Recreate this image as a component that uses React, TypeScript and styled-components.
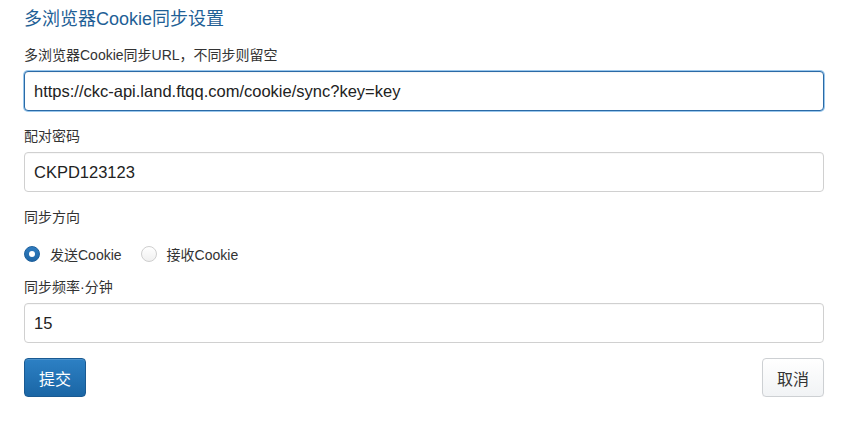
import React, { useState } from "react";
import styled, { createGlobalStyle } from "styled-components";

const Global = createGlobalStyle`
  html, body { margin: 0; padding: 0; background: #fff; }
  body {
    font-family: "Liberation Sans", Arial, "Noto Sans CJK SC", sans-serif;
    color: #333;
  }
  * { box-sizing: border-box; }
`;

const Page = styled.div`
  width: 800px;
  margin: 0 0 0 24px;
  padding-top: 7px;
`;

const Title = styled.h3`
  margin: 0 0 14px 0;
  font-size: 18px;
  line-height: 24px;
  font-weight: 400;
  color: #1f5f96;
`;

const Group = styled.div<{ $mb?: number }>`
  display: flex;
  flex-direction: column;
  margin-bottom: ${(p) => (p.$mb ?? 15)}px;
`;

const Label = styled.label<{ $mb?: number }>`
  font-size: 14px;
  line-height: 20px;
  color: #333;
  margin-bottom: ${(p) => (p.$mb ?? 6)}px;
`;

const Input = styled.input<{ $focus?: boolean }>`
  width: 100%;
  height: 40px;
  padding: 0 9px;
  font-family: "Liberation Sans", Arial, "Noto Sans CJK SC", sans-serif;
  font-size: 16.5px;
  color: #222;
  border: 1px solid ${(p) => (p.$focus ? "#2a6aa6" : "#d0d0d0")};
  border-radius: 4px;
  outline: none;
  background: #fff;
  box-shadow: ${(p) =>
    p.$focus ? "0 0 0 1px rgba(120, 180, 230, 0.75), inset 0 1px 1px rgba(0,0,0,0.04)" : "inset 0 1px 1px rgba(0,0,0,0.03)"};
`;

const RadioRow = styled.div`
  display: flex;
  align-items: center;
  height: 28px;
  margin: 13px 0 9px 0;
  gap: 19px;
`;

const RadioItem = styled.label`
  display: flex;
  align-items: center;
  gap: 10px;
  font-size: 14px;
  color: #333;
  cursor: pointer;
`;

const RadioDot = styled.span<{ $on?: boolean }>`
  width: 16px;
  height: 16px;
  border-radius: 50%;
  display: inline-flex;
  align-items: center;
  justify-content: center;
  background: ${(p) => (p.$on ? "linear-gradient(#2f7cc0, #1f66a6)" : "linear-gradient(#ffffff, #f0f0f0)")};
  border: 1px solid ${(p) => (p.$on ? "#1d5f9b" : "#cfcfcf")};
  &::after {
    content: "";
    width: 6px;
    height: 6px;
    border-radius: 50%;
    background: #fff;
    display: ${(p) => (p.$on ? "block" : "none")};
  }
`;

const Actions = styled.div`
  display: flex;
  justify-content: space-between;
  align-items: center;
`;

const Button = styled.button<{ $primary?: boolean }>`
  height: 39px;
  padding: 0 14px;
  font-family: "Liberation Sans", Arial, "Noto Sans CJK SC", sans-serif;
  font-size: 16px;
  border-radius: 4px;
  cursor: pointer;
  color: ${(p) => (p.$primary ? "#fff" : "#333")};
  background: ${(p) =>
    p.$primary ? "linear-gradient(#2d80c4, #1a66a5)" : "linear-gradient(#ffffff, #f1f3f5)"};
  border: 1px solid ${(p) => (p.$primary ? "#1a5a92" : "#cdd0d3")};
  box-shadow: ${(p) => (p.$primary ? "inset 0 1px 0 rgba(255,255,255,0.15)" : "0 1px 1px rgba(0,0,0,0.04)")};
`;

export default function App() {
  const [dir, setDir] = useState<"send" | "recv">("send");
  return (
    <>
      <Global />
      <Page>
        <Title>多浏览器Cookie同步设置</Title>
        <Group>
          <Label>多浏览器Cookie同步URL，不同步则留空</Label>
          <Input $focus defaultValue="https://ckc-api.land.ftqq.com/cookie/sync?key=key" />
        </Group>
        <Group>
          <Label>配对密码</Label>
          <Input defaultValue="CKPD123123" />
        </Group>
        <Group $mb={0}>
          <Label $mb={0}>同步方向</Label>
          <RadioRow>
            <RadioItem onClick={() => setDir("send")}>
              <RadioDot $on={dir === "send"} />
              发送Cookie
            </RadioItem>
            <RadioItem onClick={() => setDir("recv")}>
              <RadioDot $on={dir === "recv"} />
              接收Cookie
            </RadioItem>
          </RadioRow>
        </Group>
        <Group>
          <Label>同步频率·分钟</Label>
          <Input defaultValue="15" />
        </Group>
        <Actions>
          <Button $primary>提交</Button>
          <Button>取消</Button>
        </Actions>
      </Page>
    </>
  );
}
